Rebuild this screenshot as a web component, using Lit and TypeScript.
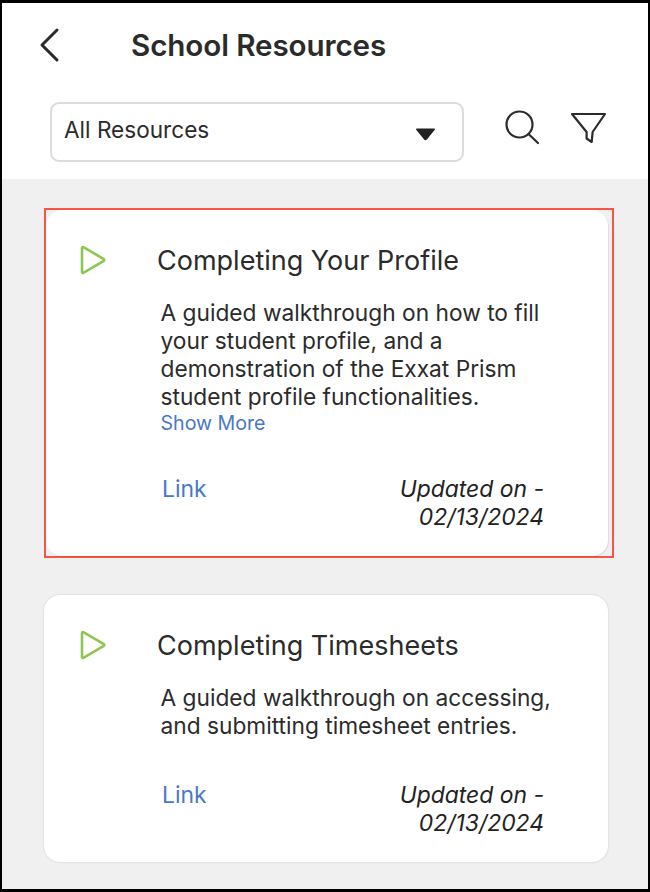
import { LitElement, html, css, svg } from 'lit';
import { customElement } from 'lit/decorators.js';

interface Resource {
  title: string;
  lines: string[];
  showMore: boolean;
  highlighted: boolean;
}

const RESOURCES: Resource[] = [
  {
    title: 'Completing Your Profile',
    lines: [
      'A guided walkthrough on how to fill',
      'your student profile, and a',
      'demonstration of the Exxat Prism',
      'student profile functionalities.',
    ],
    showMore: true,
    highlighted: true,
  },
  {
    title: 'Completing Timesheets',
    lines: ['A guided walkthrough on accessing,', 'and submitting timesheet entries.'],
    showMore: false,
    highlighted: false,
  },
];

const playIcon = svg`<path d="M3 2.2 L3 25.8 Q3 27.6 4.8 26.6 L24.4 15.2 Q26 14 24.4 12.8 L4.8 1.4 Q3 .4 3 2.2Z" />`;

@customElement('app-root')
export class AppRoot extends LitElement {
  static styles = css`
    :host {
      display: block;
      box-sizing: border-box;
      width: 650px;
      height: 892px;
      overflow: hidden;
      border: solid #000;
      border-width: 3px 2px 3px 2px;
      background: #f0f0f0;
      font-family: Inter, 'Liberation Sans', sans-serif;
      color: #2b2b2b;
    }

    .top {
      background: #fff;
      height: 176px;
      box-sizing: border-box;
      padding: 0 0 0 36px;
    }

    .title-row {
      display: flex;
      align-items: center;
      height: 84px;
    }

    .back {
      width: 24px;
      height: 36px;
      margin-right: 69px;
    }

    h1 {
      margin: 0;
      font-size: 29.6px;
      font-weight: 600;
      letter-spacing: -0.1px;
    }

    .filter-row {
      display: flex;
      align-items: center;
      padding-left: 12px;
    }

    .select {
      box-sizing: border-box;
      width: 414px;
      height: 60px;
      margin-top: 15px;
      border: 2px solid #dcdcdc;
      border-radius: 9px;
      display: flex;
      align-items: center;
      justify-content: space-between;
      padding: 0 26px 6px 12px;
      font-size: 22.6px;
    }

    .caret {
      width: 21px;
      height: 13px;
      margin-top: 11px;
    }

    .tool {
      display: block;
      fill: none;
      stroke: #2b2b2b;
      stroke-width: 2.2;
      stroke-linecap: round;
      stroke-linejoin: round;
      margin-top: 6px;
    }

    .search {
      width: 36px;
      height: 36px;
      margin-left: 40px;
    }

    .funnel {
      width: 36px;
      height: 32px;
      margin-left: 31px;
    }

    .list {
      padding: 29px 0 0 42px;
    }

    .highlight {
      box-sizing: border-box;
      width: 570px;
      border: 2px solid #f9544a;
      margin-bottom: 37px;
    }

    .card {
      box-sizing: border-box;
      width: 564px;
      background: #fff;
      border-radius: 16px;
      box-shadow: 0 0 2px rgba(0, 0, 0, 0.18);
      display: grid;
      grid-template-columns: 113px 1fr;
      padding: 31px 0 0;
    }

    .highlight .card {
      width: 562px;
      grid-template-columns: 111px 1fr;
      box-shadow: 1px 1px 1px rgba(0, 0, 0, 0.08);
    }

    .play {
      width: 28px;
      height: 30px;
      margin: 4px 0 0 35px;
      fill: none;
      stroke: #8cc653;
      stroke-width: 2.6;
      stroke-linejoin: round;
    }

    .highlight .play {
      margin-left: 33px;
    }

    h2 {
      margin: 0;
      font-size: 27px;
      font-weight: 400;
      line-height: 39px;
    }

    .body {
      grid-column: 2;
      margin: 19px 0 0 3.5px;
      font-size: 22.72px;
      line-height: 28px;
    }

    .more {
      font-size: 19.6px;
      line-height: 24px;
      color: #4a78c8;
    }

    .foot {
      grid-column: 1 / 3;
      display: flex;
      justify-content: space-between;
      padding: 0 64px 25px 118px;
      margin-top: 40px;
      font-size: 22.9px;
      line-height: 28px;
    }

    .highlight .foot {
      padding-left: 116px;
    }

    .foot.tight {
      margin-top: 41px;
    }

    .foot a {
      color: #4a78c8;
    }

    .updated {
      font-style: italic;
      text-align: right;
      color: #222;
    }
  `;

  private _renderCard(r: Resource) {
    return html`
      <div class="card">
        <svg class="play" viewBox="0 0 28 28">${playIcon}</svg>
        <h2>${r.title}</h2>
        <div class="body">
          ${r.lines.map((l) => html`<div>${l}</div>`)}
          ${r.showMore ? html`<div class="more">Show More</div>` : ''}
        </div>
        <div class="foot ${r.showMore ? '' : 'tight'}">
          <a>Link</a>
          <div class="updated">Updated on -<br />02/13/2024</div>
        </div>
      </div>
    `;
  }

  render() {
    return html`
      <div class="top">
        <div class="title-row">
          <svg class="back" viewBox="0 0 24 36" fill="none" stroke="#2b2b2b" stroke-width="3" stroke-linecap="round" stroke-linejoin="round">
            <path d="M19 3 L4 18 L19 33" />
          </svg>
          <h1>School Resources</h1>
        </div>
        <div class="filter-row">
          <div class="select">
            <span>All Resources</span>
            <svg class="caret" viewBox="0 0 22 14"><path d="M1 2 Q0 .5 2 .5 L20 .5 Q22 .5 21 2 L12.5 12.5 Q11 14 9.5 12.5Z" fill="#222" /></svg>
          </div>
          <svg class="tool search" viewBox="0 0 36 36">
            <circle cx="15.5" cy="14.5" r="13" />
            <path d="M24.5 24 L34 33" />
          </svg>
          <svg class="tool funnel" viewBox="0 0 36 32">
            <path d="M1 2 L34 2 L21.6 20 L20.7 30 L15.6 26.5 L15.6 20 Z" />
          </svg>
        </div>
      </div>
      <div class="list">
        ${RESOURCES.map((r) =>
          r.highlighted
            ? html`<div class="highlight">${this._renderCard(r)}</div>`
            : this._renderCard(r),
        )}
      </div>
    `;
  }
}

declare global {
  interface HTMLElementTagNameMap {
    'app-root': AppRoot;
  }
}
